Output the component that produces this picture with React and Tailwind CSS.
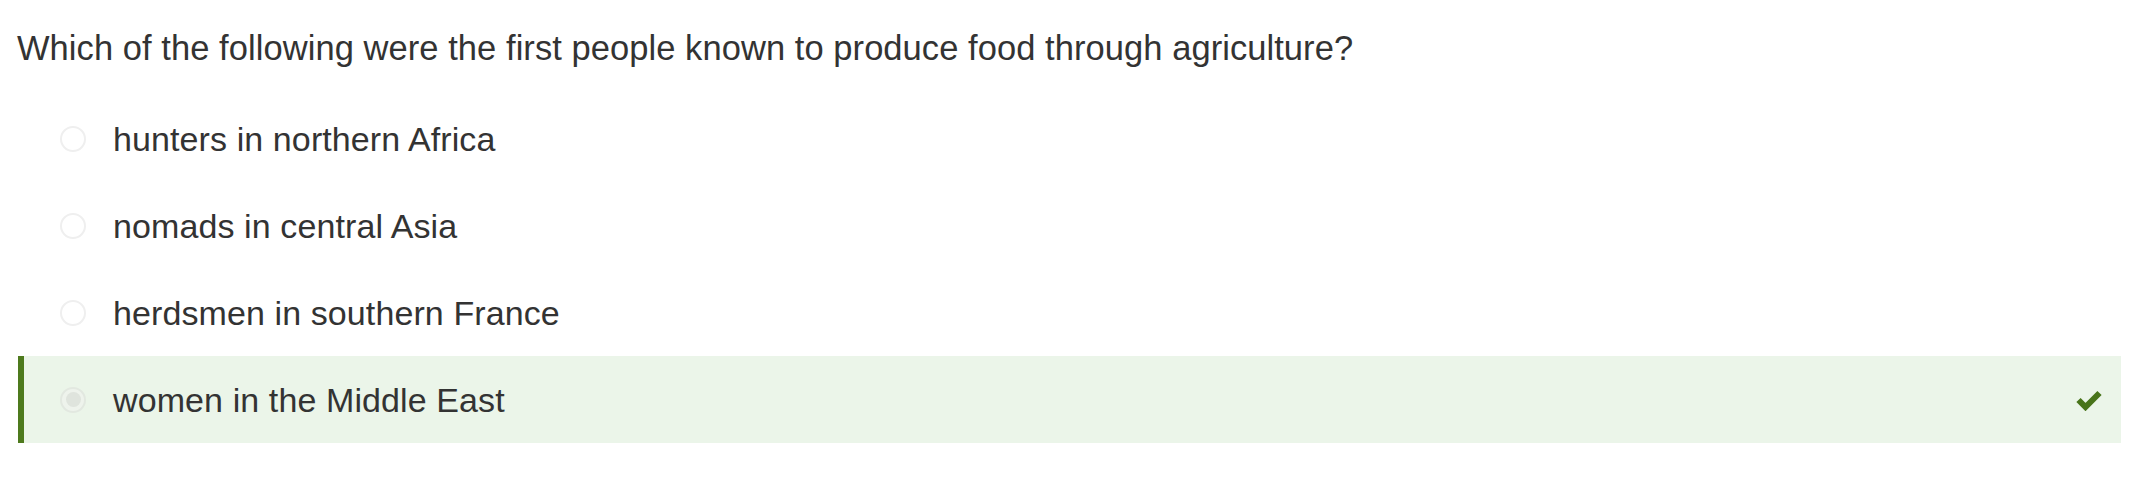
import React from "react";

const options = [
  { text: "hunters in northern Africa", correct: false },
  { text: "nomads in central Asia", correct: false },
  { text: "herdsmen in southern France", correct: false },
  { text: "women in the Middle East", correct: true },
];

function Check() {
  return (
    <svg width="26" height="22" viewBox="0 0 26 22" aria-hidden="true">
      <polyline
        points="2.5,11 9.5,18 23.5,4"
        fill="none"
        stroke="#48741a"
        strokeWidth="6"
        strokeLinejoin="miter"
        strokeLinecap="butt"
      />
    </svg>
  );
}

export default function App() {
  return (
    <div
      className="min-h-[478px] w-full bg-white pl-[17px] pr-[19px] text-[#333333]"
      style={{ fontFamily: '"Liberation Sans", Arial, sans-serif' }}
    >
      <div className="pt-[28px] text-[34.5px] leading-[40px] tracking-[0.06px]">
        Which of the following were the first people known to produce food through agriculture?
      </div>
      <div className="mt-[27px] flex flex-col pl-px">
        {options.map((o) => (
          <div
            key={o.text}
            className={
              "flex h-[87px] items-center border-l-[6px] pl-[36px] pr-[19px] " +
              (o.correct ? "border-[#4e7a1d] bg-[#ebf5e9]" : "border-transparent")
            }
          >
            {o.correct ? (
              <div className="flex h-[26px] w-[26px] shrink-0 items-center justify-center rounded-full border-2 border-[#e2e8e0] bg-[#eef3ec]">
                <div className="h-[15px] w-[15px] rounded-full bg-[#dfe4dd]" />
              </div>
            ) : (
              <div className="h-[26px] w-[26px] shrink-0 rounded-full border-2 border-[#efefef] bg-white" />
            )}
            <div className="ml-[27px] flex-1 text-[34px] leading-[40px] tracking-[0.1px]">{o.text}</div>
            {o.correct && <Check />}
          </div>
        ))}
      </div>
    </div>
  );
}
